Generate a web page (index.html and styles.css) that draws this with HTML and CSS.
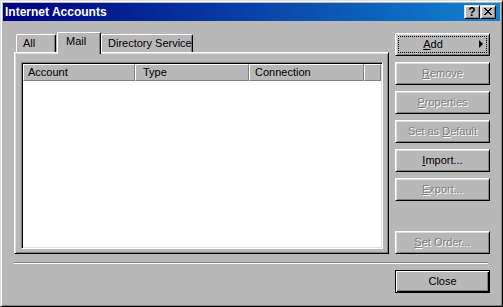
FILE: index.html
```html
<!DOCTYPE html>
<html>
<head>
<meta charset="utf-8">
<title>Internet Accounts</title>
<link rel="stylesheet" href="styles.css">
</head>
<body>
<div class="window">
  <div class="titlebar">
    <span class="title">Internet Accounts</span>
    <div class="caption-btns">
      <div class="cbtn"><span class="q">?</span></div>
      <div class="cbtn"><svg class="xglyph" width="8" height="7" viewBox="0 0 8 7" shape-rendering="crispEdges"><path d="M0 0h2v1H0z M6 0h2v1H6z M1 1h2v1H1z M5 1h2v1H5z M2 2h4v1H2z M3 3h2v1H3z M2 4h4v1H2z M1 5h2v1H1z M5 5h2v1H5z M0 6h2v1H0z M6 6h2v1H6z" fill="#000"/></svg></div>
    </div>
  </div>
  <div class="content">
    <div class="main">
      <div class="left">
        <div class="tabs">
          <div class="tab t-all">All</div>
          <div class="tab sel t-mail">Mail</div>
          <div class="tab t-dir">Directory Service</div>
        </div>
        <div class="panel">
          <div class="list">
            <div class="lhead">
              <div class="hcell c1">Account</div>
              <div class="hcell c2">Type</div>
              <div class="hcell c3">Connection</div>
              <div class="hcell c4"></div>
            </div>
          </div>
        </div>
      </div>
      <div class="buttons">
        <div class="btn focused"><div class="focus"><span class="lbl"><u>A</u>dd</span><span class="arrow"></span></div></div>
        <div class="btn dis"><span class="lbl"><u>R</u>emove</span></div>
        <div class="btn dis"><span class="lbl"><u>P</u>roperties</span></div>
        <div class="btn dis"><span class="lbl">Set as <u>D</u>efault</span></div>
        <div class="btn"><span class="lbl"><u>I</u>mport...</span></div>
        <div class="btn dis"><span class="lbl"><u>E</u>xport...</span></div>
        <div class="btn dis setorder"><span class="lbl"><u>S</u>et Order...</span></div>
      </div>
    </div>
    <div class="sep"></div>
    <div class="footer">
      <div class="btn default"><span class="lbl">Close</span></div>
    </div>
  </div>
</div>
</body>
</html>
```
FILE: styles.css
```css
html, body {
  margin: 0;
  padding: 0;
  background: #b8b8b8;
}
body {
  font-family: "Liberation Sans", Arial, sans-serif;
  font-size: 11px;
  line-height: 13px;
  color: #000;
}
.window {
  width: 503px;
  height: 307px;
  box-sizing: border-box;
  border: 1px solid;
  border-color: #dfdfdf #000 #000 #dfdfdf;
  box-shadow: inset 1px 1px #fff, inset -1px -1px #808080;
  padding: 2px;
  background: #b8b8b8;
  display: flex;
  flex-direction: column;
}
.titlebar {
  height: 18px;
  flex: none;
  display: flex;
  align-items: center;
  padding: 0 4px 0 2px;
  background: linear-gradient(90deg, #000080, #1084d0);
}
.title {
  flex: 1;
  color: #fff;
  font-weight: bold;
  font-size: 12px;
  line-height: 16px;
  padding-bottom: 1px;
  white-space: nowrap;
}
.caption-btns {
  display: flex;
}
.cbtn {
  width: 16px;
  height: 14px;
  box-sizing: border-box;
  border: 1px solid;
  border-color: #dfdfdf #000 #000 #dfdfdf;
  box-shadow: inset 1px 1px #fff, inset -1px -1px #808080;
  background: #b8b8b8;
  display: flex;
  align-items: center;
  justify-content: center;
}
.q {
  font-weight: bold;
  font-size: 12px;
  line-height: 12px;
  margin-top: -1px;
}
.xglyph {
  display: block;
  margin-top: -1px;
}
.content {
  flex: 1;
  display: flex;
  flex-direction: column;
  padding: 11px 10px 0 11px;
}
.main {
  display: flex;
  gap: 6px;
}
.left {
  width: 375px;
  display: flex;
  flex-direction: column;
}
.tabs {
  height: 20px;
  display: flex;
  align-items: flex-end;
  padding-left: 2px;
}
.tab {
  height: 18px;
  box-sizing: border-box;
  border-top: 1px solid #fff;
  border-left: 1px solid #fff;
  border-right: 1px solid #000;
  border-radius: 2px 2px 0 0;
  box-shadow: inset -1px 0 #808080;
  padding: 2px 0 0 6px;
  white-space: nowrap;
}
.t-all { width: 40px; }
.t-mail { width: 44px; margin-left: 1px; }
.t-dir { width: 92px; }
.tab.sel {
  height: 22px;
  margin-bottom: -2px;
  position: relative;
  z-index: 1;
  background: #b8b8b8;
  padding-left: 8px;
}
.panel {
  height: 202px;
  box-sizing: border-box;
  border: 1px solid;
  border-color: #fff #000 #000 #fff;
  box-shadow: inset 1px 1px #dfdfdf, inset -1px -1px #808080;
  padding: 9px 5px 4px 6px;
  display: flex;
}
.list {
  flex: 1;
  box-sizing: border-box;
  border: 1px solid;
  border-color: #808080 #fff #fff #808080;
  box-shadow: inset 1px 1px #000, inset -1px -1px #dfdfdf;
  background: #fff;
  padding: 1px;
}
.lhead {
  display: flex;
  height: 17px;
  background: #b8b8b8;
}
.hcell {
  box-sizing: border-box;
  height: 17px;
  border-top: 1px solid #fff;
  border-left: 1px solid #fff;
  border-right: 1px solid #808080;
  border-bottom: 1px solid #808080;
  line-height: 15px;
  white-space: nowrap;
}
.c1 { width: 112px; padding-left: 4px; }
.c2 { width: 114px; padding-left: 7px; }
.c3 { width: 115px; padding-left: 5px; }
.c4 { flex: 1; }
.buttons {
  width: 95px;
  display: flex;
  flex-direction: column;
  gap: 6px;
  padding-top: 1px;
}
.btn {
  width: 95px;
  height: 23px;
  box-sizing: border-box;
  border: 1px solid;
  border-color: #fff #000 #000 #fff;
  box-shadow: inset 1px 1px #dfdfdf, inset -1px -1px #808080;
  display: flex;
  align-items: center;
  justify-content: center;
  white-space: nowrap;
}
.btn .lbl {
  text-align: center;
}
.btn.dis .lbl {
  color: #808080;
  text-shadow: 1px 1px 0 #fff;
}
.btn.focused {
  padding: 2px;
  align-items: stretch;
}
.focus {
  flex: 1;
  border: 1px dotted #000;
  display: flex;
  align-items: center;
}
.focus .lbl {
  flex: 1;
  padding-right: 12px;
}
.arrow {
  width: 0;
  height: 0;
  border-left: 4px solid #000;
  border-top: 4px solid transparent;
  border-bottom: 4px solid transparent;
  margin-right: 3px;
  margin-top: -1px;
}
.setorder {
  margin-top: auto;
}
.sep {
  margin-top: 8px;
  margin-right: 2px;
  border-top: 1px solid #808080;
  border-bottom: 1px solid #fff;
}
.footer {
  display: flex;
  justify-content: flex-end;
  margin-top: 6px;
}
.btn.default {
  border-color: #000;
  box-shadow: inset 1px 1px #fff, inset -1px -1px #000, inset -2px -2px #808080;
}
```
